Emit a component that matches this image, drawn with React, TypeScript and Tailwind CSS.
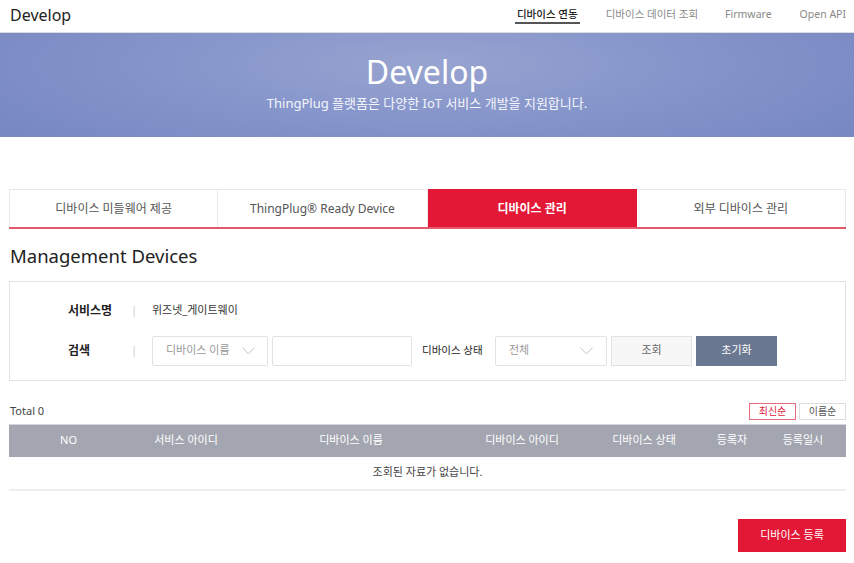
import React from "react";

const font = { fontFamily: '"Noto Sans", "Noto Sans CJK KR", sans-serif' };

function Chevron() {
  return (
    <svg width="13" height="8" viewBox="0 0 13 8" fill="none">
      <path d="M0.5 0.5 L6.5 7 L12.5 0.5" stroke="#c4c4c4" strokeWidth="1" />
    </svg>
  );
}

export default function App() {
  const tabs = ["디바이스 미들웨어 제공", "ThingPlug® Ready Device", "디바이스 관리", "외부 디바이스 관리"];
  const cols = ["NO", "서비스 아이디", "디바이스 이름", "디바이스 아이디", "디바이스 상태", "등록자", "등록일시"];
  return (
    <div className="w-[854px] h-[563px] bg-white overflow-hidden text-[#333]" style={font}>
      {/* Header */}
      <header className="h-[33px] border-b border-[#dcdcdc] flex items-center justify-between pl-[10px] pr-[8px]">
        <div className="text-[16px] text-[#222] leading-none -mt-[2px]">Develop</div>
        <nav className="flex items-center text-[10.5px] h-full">
          <div className="relative text-[#222] font-medium mr-[28px] h-full flex items-center -mt-[2px]">
            디바이스 연동
            <span className="absolute left-[-2px] right-[-2px] top-[23px] h-[2px] bg-[#555]" />
          </div>
          <div className="text-[#888] mr-[27px] -mt-[2px]">디바이스 데이터 조회</div>
          <div className="text-[#888] mr-[28px] -mt-[2px]">Firmware</div>
          <div className="text-[#888] -mt-[2px]">Open API</div>
        </nav>
      </header>

      {/* Banner */}
      <section className="h-[104px] bg-[radial-gradient(ellipse_60%_110%_at_50%_30%,#98a4d0_0%,#8796cb_45%,#7888c2_100%)] flex flex-col items-center text-white">
        <div className="text-[32px] leading-none mt-[23px]">Develop</div>
        <div className="text-[13px] leading-none mt-[9px] text-[#f4f5fb]">ThingPlug 플랫폼은 다양한 IoT 서비스 개발을 지원합니다.</div>
      </section>

      <main className="pl-[9px] pr-[8px]">
        {/* Tabs */}
        <div className="mt-[52px] grid grid-cols-4 border-b-2 border-[#e25a6c]">
          {tabs.map((t, i) => (
            <div
              key={t}
              className={
                "h-[38px] flex items-center justify-center text-[12px] border-t border-[#e8e8e8] " +
                (i === 0 ? "border-l " : "") +
                (i === 3 ? "border-r " : "") +
                (i === 2
                  ? "bg-[#e31837] text-white font-bold border-[#e31837]"
                  : "text-[#555] " + (i < 2 ? "border-r border-[#e8e8e8]" : ""))
              }
            >
              {t}
            </div>
          ))}
        </div>

        {/* Title */}
        <h1 className="text-[18.5px] text-[#222] leading-none mt-[18px] ml-[1px]">Management Devices</h1>

        {/* Search box */}
        <div className="mt-[15px] h-[100px] border border-[#e2e2e2] pt-[19px]">
          <div className="flex items-center h-[20px] text-[11px]">
            <div className="ml-[58px] w-[63px] font-bold text-[12px] text-[#222]">서비스명</div>
            <div className="text-[#ccc] w-[21px]">|</div>
            <div className="text-[#333]">위즈넷_게이트웨이</div>
          </div>
          <div className="flex items-center h-[30px] mt-[15px] text-[11px]">
            <div className="ml-[58px] w-[63px] font-bold text-[12px] text-[#222]">검색</div>
            <div className="text-[#ccc] w-[21px]">|</div>
            <div className="w-[116px] h-[30px] border border-[#e2e2e2] rounded-[2px] flex items-center justify-between pl-[13px] pr-[12px] text-[#999]">
              <span>디바이스 이름</span>
              <Chevron />
            </div>
            <div className="ml-[4px] w-[140px] h-[30px] border border-[#e2e2e2] rounded-[2px]" />
            <div className="ml-[10px] w-[62px] text-[10.5px] text-[#222] whitespace-nowrap">디바이스 상태</div>
            <div className="ml-[11px] w-[112px] h-[30px] border border-[#e2e2e2] rounded-[2px] flex items-center justify-between pl-[13px] pr-[13px] text-[#999]">
              <span>전체</span>
              <Chevron />
            </div>
            <div className="ml-[4px] w-[81px] h-[30px] border border-[#e2e2e2] bg-[#f7f7f7] flex items-center justify-center text-[#666]">조회</div>
            <div className="ml-[4px] w-[81px] h-[30px] bg-[#6b7891] flex items-center justify-center text-white">초기화</div>
          </div>
        </div>

        {/* Total + sort */}
        <div className="mt-[22px] flex items-center justify-between h-[17px]">
          <div className="text-[11px] text-[#444] ml-[1px]">Total 0</div>
          <div className="flex gap-[3px]">
            <div className="w-[47px] h-[17px] border border-[#e96a7c] text-[#e31837] text-[10px] flex items-center justify-center">최신순</div>
            <div className="w-[47px] h-[17px] border border-[#ddd] text-[#555] text-[10px] flex items-center justify-center">이름순</div>
          </div>
        </div>

        {/* Table */}
        <div className="mt-[4px] grid grid-cols-[119px_116px_214px_128px_116px_60px_82px] h-[33px] bg-[#a3a6b0] border-t border-[#d4d6dc] text-[11px] text-white">
          {cols.map((c) => (
            <div key={c} className="flex items-center justify-center">{c}</div>
          ))}
        </div>
        <div className="h-[34px] flex items-center justify-center text-[11px] text-[#444] border-b-2 border-[#eeeeee]">
          조회된 자료가 없습니다.
        </div>

        {/* Register */}
        <div className="flex justify-end mt-[28px]">
          <div className="w-[108px] h-[33px] bg-[#e31837] text-white text-[11px] flex items-center justify-center">디바이스 등록</div>
        </div>
      </main>
    </div>
  );
}
